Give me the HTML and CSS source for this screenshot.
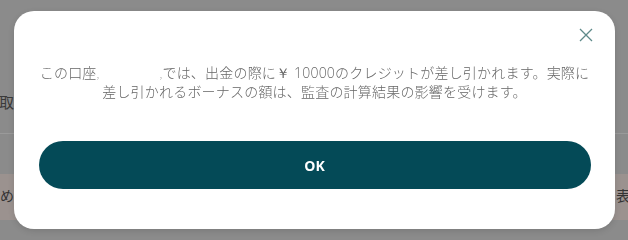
FILE: index.html
```html
<!DOCTYPE html>
<html lang="ja">
<head>
<meta charset="utf-8">
<link rel="stylesheet" href="styles.css">
</head>
<body>
<div class="page">
  <div class="page-top"><span class="page-label">取引</span></div>
  <div class="page-gap"></div>
  <div class="page-band">
    <span class="band-left">ため、</span>
    <span class="band-right">表示さ</span>
  </div>
</div>

<div class="modal">
  <button class="close" aria-label="閉じる">
    <svg width="14" height="14" viewBox="0 0 14 14"><path d="M1 1L13 13M13 1L1 13" stroke="#5e8a8a" stroke-width="1.3" fill="none"/></svg>
  </button>
  <p class="message">この口座<span class="mark">,</span><span class="masked"></span><span class="mark">,</span>では、出金の際に<span class="num">￥ 10000</span>のクレジットが差し引かれます。実際に差し引かれるボーナスの額は、監査の計算結果の影響を受けます。</p>
  <button class="ok">OK</button>
</div>
</body>
</html>
```

FILE: styles.css
```css
* { box-sizing: border-box; }
html, body { margin: 0; padding: 0; }
body {
  width: 628px;
  height: 240px;
  overflow: hidden;
  background: #8b8b8b;
  font-family: "Noto Sans CJK JP", "Noto Sans", sans-serif;
}
.page { display: flex; flex-direction: column; }
.page-top {
  height: 134px;
  border-bottom: 1px solid #9a9a9a;
  display: flex;
  align-items: flex-end;
  padding: 0 0 22px 0;
}
.page-label {
  font-size: 15px;
  color: #3a3a3a;
  margin-left: -1px;
  line-height: 18px;
}
.page-gap { height: 40px; }
.page-band {
  height: 46px;
  background: #9b928f;
  display: flex;
  justify-content: space-between;
  align-items: center;
  font-size: 14px;
  color: #333;
  padding-bottom: 4px;
}
.band-left { margin-left: -14px; }
.band-right { margin-right: -30px; }

.modal {
  position: fixed;
  left: 14px;
  top: 11px;
  width: 601px;
  height: 218px;
  background: #fff;
  border-radius: 20px;
  box-shadow: 0 2px 6px rgba(0,0,0,0.12);
  display: flex;
  flex-direction: column;
  align-items: center;
  padding: 52px 24px 0;
}
.close {
  position: absolute;
  right: 22px;
  top: 17px;
  width: 14px;
  height: 14px;
  padding: 0;
  border: 0;
  background: none;
  display: flex;
}
.message {
  margin: 0;
  width: 556px;
  text-align: center;
  font-size: 14px;
  font-weight: 300;
  line-height: 18px;
  color: #666;
  letter-spacing: 0.2px;
}
.mark { color: #aaa; font-size: 11px; }
.masked { display: inline-block; width: 60px; }
.num { font-family: "Open Sans", sans-serif; }
.ok {
  margin-top: 41px;
  width: 552px;
  height: 48px;
  border: 0;
  border-radius: 24px;
  background: #044a57;
  color: #fff;
  font-family: "Open Sans", sans-serif;
  font-weight: 700;
  font-size: 14px;
  letter-spacing: 0;
}
```
